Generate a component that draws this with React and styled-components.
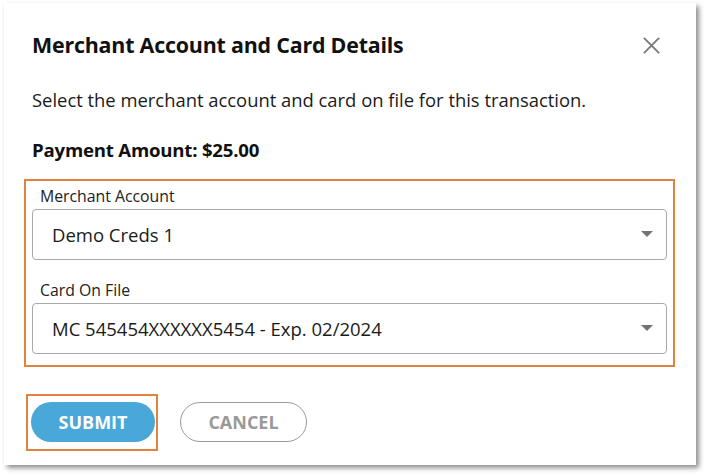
import React from 'react'
import styled, { createGlobalStyle } from 'styled-components'

const GlobalStyle = createGlobalStyle`
  body {
    margin: 0;
    background: #ffffff;
    font-family: "Open Sans", "Liberation Sans", sans-serif;
  }
`

const App = () => {
  return (
    <Page>
      <GlobalStyle />
      <Dialog>
        <Header>
          <Title>Merchant Account and Card Details</Title>
          <CloseButton aria-label="close">
            <svg width="19" height="19" viewBox="0 0 20 20">
              <path d="M2 2 L18 18 M18 2 L2 18" stroke="#7a7a7a" strokeWidth="2" fill="none" />
            </svg>
          </CloseButton>
        </Header>
        <Description>Select the merchant account and card on file for this transaction.</Description>
        <Amount>Payment Amount: $25.00</Amount>
        <Highlight>
          <Field>
            <Label>Merchant Account</Label>
            <Select>
              <span>Demo Creds 1</span>
              <Caret />
            </Select>
          </Field>
          <Field>
            <Label>Card On File</Label>
            <Select>
              <span>MC 545454XXXXXX5454 - Exp. 02/2024</span>
              <Caret />
            </Select>
          </Field>
        </Highlight>
        <Actions>
          <ButtonHighlight>
            <SubmitButton>SUBMIT</SubmitButton>
          </ButtonHighlight>
          <CancelButton>CANCEL</CancelButton>
        </Actions>
      </Dialog>
    </Page>
  )
}

const Page = styled.div`
  padding: 3px 0 0 4px;
  width: 708px;
  height: 476px;
  box-sizing: border-box;
`

const Dialog = styled.div`
  width: 692px;
  height: 462px;
  box-sizing: border-box;
  background: #fff;
  box-shadow: 3px 3px 5px rgba(0, 0, 0, 0.45);
  padding: 28px 0 0 20px;
  display: flex;
  flex-direction: column;
`

const Header = styled.div`
  display: flex;
  justify-content: space-between;
  align-items: center;
  padding: 0 35px 0 8px;
`

const Title = styled.h2`
  margin: 0;
  font-size: 21.4px;
  line-height: 28px;
  font-weight: 700;
  color: #111;
  letter-spacing: -0.2px;
`

const CloseButton = styled.div`
  width: 19px;
  height: 19px;
  display: flex;
`

const Description = styled.p`
  margin: 28px 0 0 8px;
  font-size: 18.4px;
  line-height: 26px;
  color: #1a1a1a;
`

const Amount = styled.p`
  margin: 24px 0 0 8px;
  font-size: 18.6px;
  line-height: 26px;
  font-weight: 700;
  color: #111;
  letter-spacing: -0.2px;
`

const Highlight = styled.div`
  margin-top: 16px;
  width: 651px;
  box-sizing: border-box;
  border: 2.5px solid #e0833f;
  padding: 4.5px 6px 11px 6px;
  display: flex;
  flex-direction: column;
  gap: 20px;
`

const Field = styled.div`
  display: flex;
  flex-direction: column;
`

const Label = styled.div`
  font-size: 15.8px;
  color: #222;
  margin-left: 8px;
  line-height: 20px;
  margin-bottom: 3px;
`

const Select = styled.div`
  height: 51px;
  box-sizing: border-box;
  border: 1px solid #a9a9a9;
  border-radius: 4px;
  display: flex;
  align-items: center;
  justify-content: space-between;
  padding: 0 13px 0 19px;
  font-size: 18.5px;
  color: #1a1a1a;
`

const Caret = styled.span`
  width: 0;
  height: 0;
  border-left: 6px solid transparent;
  border-right: 6px solid transparent;
  border-top: 6px solid #737373;
`

const Actions = styled.div`
  margin-top: 27px;
  display: flex;
  align-items: center;
  gap: 22px;
  padding-left: 2px;
`

const ButtonHighlight = styled.div`
  border: 2.5px solid #e0833f;
  padding: 6px 1px 6px 3px;
  width: 132px;
  height: 57px;
  box-sizing: border-box;
  display: flex;
  align-items: center;
`

const SubmitButton = styled.button`
  width: 124px;
  height: 40px;
  padding: 0;
  border: none;
  border-radius: 20px;
  background: #4aa8d8;
  color: #fff;
  font-family: "Open Sans", "Liberation Sans", sans-serif;
  font-size: 18px;
  font-weight: 700;
`

const CancelButton = styled.button`
  width: 127px;
  height: 40px;
  padding: 0;
  background: #fff;
  border: 1px solid #9a9a9a;
  border-radius: 20px;
  color: #999;
  font-family: "Open Sans", "Liberation Sans", sans-serif;
  font-size: 18px;
  font-weight: 700;
`

export default App
